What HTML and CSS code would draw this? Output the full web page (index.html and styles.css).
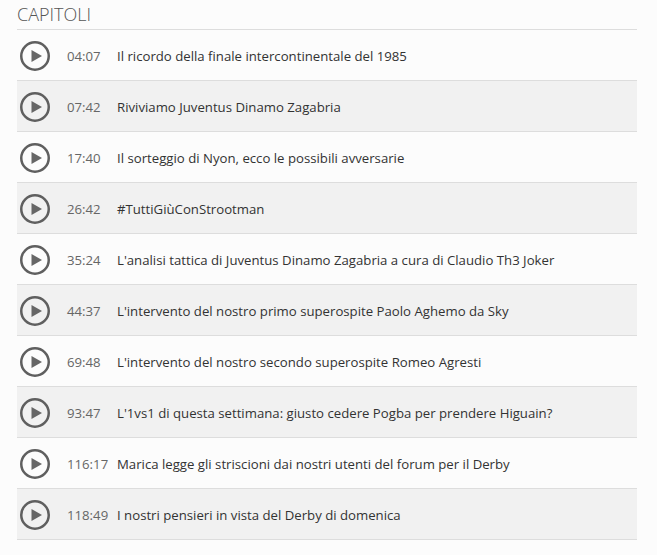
FILE: index.html
```html
<!DOCTYPE html>
<html lang="it">

<head>
  <meta charset="UTF-8">
  <title>Capitoli</title>
  <link rel="stylesheet" href="styles.css">
</head>

<body>
  <div class="chapters">
    <h3>CAPITOLI</h3>
    <ul class="chapter-list">
      <li class="chapter">
        <svg class="play" viewBox="0 0 30 30"><circle cx="15" cy="15" r="13.75"></circle><path d="M11.5 9 L22 15 L11.5 21 Z"></path></svg>
        <span class="time">04:07</span>
        <span class="title">Il ricordo della finale intercontinentale del 1985</span>
      </li>
      <li class="chapter">
        <svg class="play" viewBox="0 0 30 30"><circle cx="15" cy="15" r="13.75"></circle><path d="M11.5 9 L22 15 L11.5 21 Z"></path></svg>
        <span class="time">07:42</span>
        <span class="title">Riviviamo Juventus Dinamo Zagabria</span>
      </li>
      <li class="chapter">
        <svg class="play" viewBox="0 0 30 30"><circle cx="15" cy="15" r="13.75"></circle><path d="M11.5 9 L22 15 L11.5 21 Z"></path></svg>
        <span class="time">17:40</span>
        <span class="title">Il sorteggio di Nyon, ecco le possibili avversarie</span>
      </li>
      <li class="chapter">
        <svg class="play" viewBox="0 0 30 30"><circle cx="15" cy="15" r="13.75"></circle><path d="M11.5 9 L22 15 L11.5 21 Z"></path></svg>
        <span class="time">26:42</span>
        <span class="title">#TuttiGiùConStrootman</span>
      </li>
      <li class="chapter">
        <svg class="play" viewBox="0 0 30 30"><circle cx="15" cy="15" r="13.75"></circle><path d="M11.5 9 L22 15 L11.5 21 Z"></path></svg>
        <span class="time">35:24</span>
        <span class="title">L'analisi tattica di Juventus Dinamo Zagabria a cura di Claudio Th3 Joker</span>
      </li>
      <li class="chapter">
        <svg class="play" viewBox="0 0 30 30"><circle cx="15" cy="15" r="13.75"></circle><path d="M11.5 9 L22 15 L11.5 21 Z"></path></svg>
        <span class="time">44:37</span>
        <span class="title">L'intervento del nostro primo superospite Paolo Aghemo da Sky</span>
      </li>
      <li class="chapter">
        <svg class="play" viewBox="0 0 30 30"><circle cx="15" cy="15" r="13.75"></circle><path d="M11.5 9 L22 15 L11.5 21 Z"></path></svg>
        <span class="time">69:48</span>
        <span class="title">L'intervento del nostro secondo superospite Romeo Agresti</span>
      </li>
      <li class="chapter">
        <svg class="play" viewBox="0 0 30 30"><circle cx="15" cy="15" r="13.75"></circle><path d="M11.5 9 L22 15 L11.5 21 Z"></path></svg>
        <span class="time">93:47</span>
        <span class="title">L'1vs1 di questa settimana: giusto cedere Pogba per prendere Higuain?</span>
      </li>
      <li class="chapter">
        <svg class="play" viewBox="0 0 30 30"><circle cx="15" cy="15" r="13.75"></circle><path d="M11.5 9 L22 15 L11.5 21 Z"></path></svg>
        <span class="time">116:17</span>
        <span class="title">Marica legge gli striscioni dai nostri utenti del forum per il Derby</span>
      </li>
      <li class="chapter">
        <svg class="play" viewBox="0 0 30 30"><circle cx="15" cy="15" r="13.75"></circle><path d="M11.5 9 L22 15 L11.5 21 Z"></path></svg>
        <span class="time">118:49</span>
        <span class="title">I nostri pensieri in vista del Derby di domenica</span>
      </li>
    </ul>
  </div>
</body>

</html>
```

FILE: styles.css
```css
* {
  box-sizing: border-box;
  margin: 0;
  padding: 0;
  font-family: 'Open Sans', 'Noto Sans', sans-serif;
}

html {
  background-color: #fcfcfc;
}

body {
  color: #333;
  overflow: hidden;
}

.chapters {
  margin: 0 20px 0 17px;
}

.chapters h3 {
  height: 30px;
  padding-top: 3px;
  border-bottom: 1px solid #ddd;
  color: #555;
  font-size: 18px;
  font-weight: 300;
  line-height: 23px;
}

.chapter-list {
  list-style: none;
}

.chapter {
  display: flex;
  align-items: center;
  height: 51px;
  padding-top: 1px;
  border-bottom: 1px solid #ddd;
  font-size: 13.2px;
}

.chapter:nth-child(even) {
  background-color: #f1f1f1;
}

.play {
  flex: none;
  width: 30px;
  height: 30px;
  margin-left: 3px;
}

.play circle {
  fill: none;
  stroke: #5f5f5f;
  stroke-width: 2.5;
}

.play path {
  fill: #666;
}

.time {
  width: 67px;
  padding-left: 17px;
  color: #666;
  flex: none;
}

.title {
  color: #333;
}
```
